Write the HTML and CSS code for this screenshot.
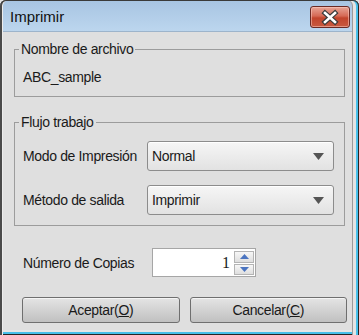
FILE: index.html
```html
<!doctype html>
<html>

<head>
  <meta charset="UTF-8">
  <meta name="viewport" content="width=device-width, initial-scale=1.0">
  <title>Imprimir</title>
  <link rel="stylesheet" href="styles.css">
</head>

<body>

  <div class="window">
    <div class="titlebar">
      <span class="title">Imprimir</span>
      <button class="close">
        <svg width="40" height="22" viewBox="0 0 40 22">
          <path d="M15 7 L25 16 M25 7 L15 16" stroke="#3b3b3b" stroke-width="5" stroke-linecap="square" fill="none" />
          <path d="M15 7 L25 16 M25 7 L15 16" stroke="#ffffff" stroke-width="2.6" stroke-linecap="square" fill="none" />
        </svg>
      </button>
    </div>

    <div class="content">
      <fieldset class="group file">
        <legend>Nombre de archivo</legend>
        <div class="filename">ABC_sample</div>
      </fieldset>

      <fieldset class="group flow">
        <legend>Flujo trabajo</legend>
        <div class="row">
          <label>Modo de Impresión</label>
          <div class="select">
            <span>Normal</span>
            <svg class="arrow" width="11" height="7" viewBox="0 0 11 7"><path d="M0 0 H11 L5.5 7 Z" fill="#555" /></svg>
          </div>
        </div>
        <div class="row">
          <label>Método de salida</label>
          <div class="select">
            <span>Imprimir</span>
            <svg class="arrow" width="11" height="7" viewBox="0 0 11 7"><path d="M0 0 H11 L5.5 7 Z" fill="#555" /></svg>
          </div>
        </div>
      </fieldset>

      <div class="copies">
        <label>Número de Copias</label>
        <div class="spin">
          <div class="spin-value">1</div>
          <div class="spin-btns">
            <span class="spin-btn"><svg width="9" height="5" viewBox="0 0 9 5"><path d="M0 5 H9 L4.5 0 Z" fill="#4b74c0" /></svg></span>
            <span class="spin-btn"><svg width="9" height="5" viewBox="0 0 9 5"><path d="M0 0 H9 L4.5 5 Z" fill="#4b74c0" /></svg></span>
          </div>
        </div>
      </div>

      <div class="actions">
        <button class="btn">Aceptar(<u>O</u>)</button>
        <button class="btn">Cancelar(<u>C</u>)</button>
      </div>
    </div>
  </div>

</body>

</html>
```

FILE: styles.css
```css
* {
  margin: 0;
  padding: 0;
  box-sizing: border-box;
}

body {
  background: #e4e4e4;
  font-family: "Liberation Sans", Arial, sans-serif;
  font-size: 14px;
  letter-spacing: -0.35px;
  color: #1a1a1a;
}

.window {
  width: 359px;
  height: 335px;
  border-radius: 6px 6px 0 0;
  overflow: hidden;
  background: linear-gradient(to bottom, #a7c4e2 0, #bcd6ee 31px, #9db4cb 31px, #9db4cb 32px, #dfdfdf 32px);
  box-shadow:
    inset 0 1px #3a3a3a,
    inset 2px 0 #4a4a4a,
    inset 3px 0 #ececec,
    inset -1px 0 #262626,
    inset -3px 0 #47c0ea,
    inset -6px 0 #e4e4e4,
    inset -7px 0 #9a9a9a,
    inset 0 -1px #262626,
    inset 0 -3px #47c0ea,
    inset 0 -5px #e6e6e6;
}

.titlebar {
  height: 32px;
  display: flex;
  align-items: center;
  justify-content: space-between;
  padding: 0 9px 0 10px;
}

.title {
  font-size: 15px;
  letter-spacing: 0;
  color: #111;
}

.close {
  width: 40px;
  height: 22px;
  margin-top: 2px;
  border: 1px solid #6a2a24;
  border-radius: 3px;
  background: linear-gradient(to bottom, #e8a596 0, #d66a55 45%, #c2442c 55%, #c85a40 100%);
  box-shadow: inset 0 0 0 1px rgba(255, 210, 200, 0.5);
  display: flex;
  align-items: center;
  justify-content: center;
}

.close svg {
  display: block;
  margin: -1px;
}

.content {
  padding: 10px 14px 0 14px;
}

.group {
  border: 1px solid #9c9c9c;
  padding: 0 8px;
}

.group legend {
  padding: 0 2px;
  margin-left: -4px;
  line-height: 15px;
}

.filename {
  line-height: 15px;
  padding: 13px 0 11px;
}

.flow {
  margin-top: 18px;
  padding: 11px 10px 10px 8px;
  display: flex;
  flex-direction: column;
  gap: 14px;
}

.row {
  display: flex;
  align-items: center;
  height: 30px;
}

.row label {
  width: 124px;
}

.select {
  flex: 1;
  height: 30px;
  border: 1px solid #8c8c8c;
  border-radius: 3px;
  background: linear-gradient(to bottom, #f6f6f6, #e2e2e2);
  box-shadow: inset 0 1px #ffffff;
  display: flex;
  align-items: center;
  justify-content: space-between;
  padding: 0 9px 0 4px;
}

.arrow {
  display: block;
}

.copies {
  margin-top: 22px;
  height: 29px;
  display: flex;
  align-items: center;
}

.copies label {
  width: 138px;
  padding-left: 9px;
}

.spin {
  width: 104px;
  height: 29px;
  border: 1px solid #a6a6a6;
  background: #ffffff;
  display: flex;
  padding: 2px 1px 1px 2px;
}

.spin-value {
  flex: 1;
  text-align: right;
  padding-right: 4px;
  font-family: "Liberation Serif", "Times New Roman", serif;
  font-size: 16px;
  letter-spacing: 0;
  line-height: 24px;
}

.spin-btns {
  width: 20px;
  display: flex;
  flex-direction: column;
  gap: 1px;
}

.spin-btn {
  flex: 1;
  border: 1px solid #b4b4b4;
  background: linear-gradient(to bottom, #f7f7f7, #dedede);
  display: flex;
  align-items: center;
  justify-content: center;
}

.spin-btn svg {
  display: block;
}

.actions {
  margin: 20px -2px 0 8px;
  display: flex;
  gap: 10px;
}

.btn {
  flex: 1;
  height: 26px;
  border: 1px solid #6f6f6f;
  border-radius: 3px;
  background: linear-gradient(to bottom, #e4e4e4, #c0c0c0);
  box-shadow: inset 0 1px #f4f4f4;
  font-family: inherit;
  font-size: 14px;
  letter-spacing: -0.35px;
  color: #1a1a1a;
}
```
